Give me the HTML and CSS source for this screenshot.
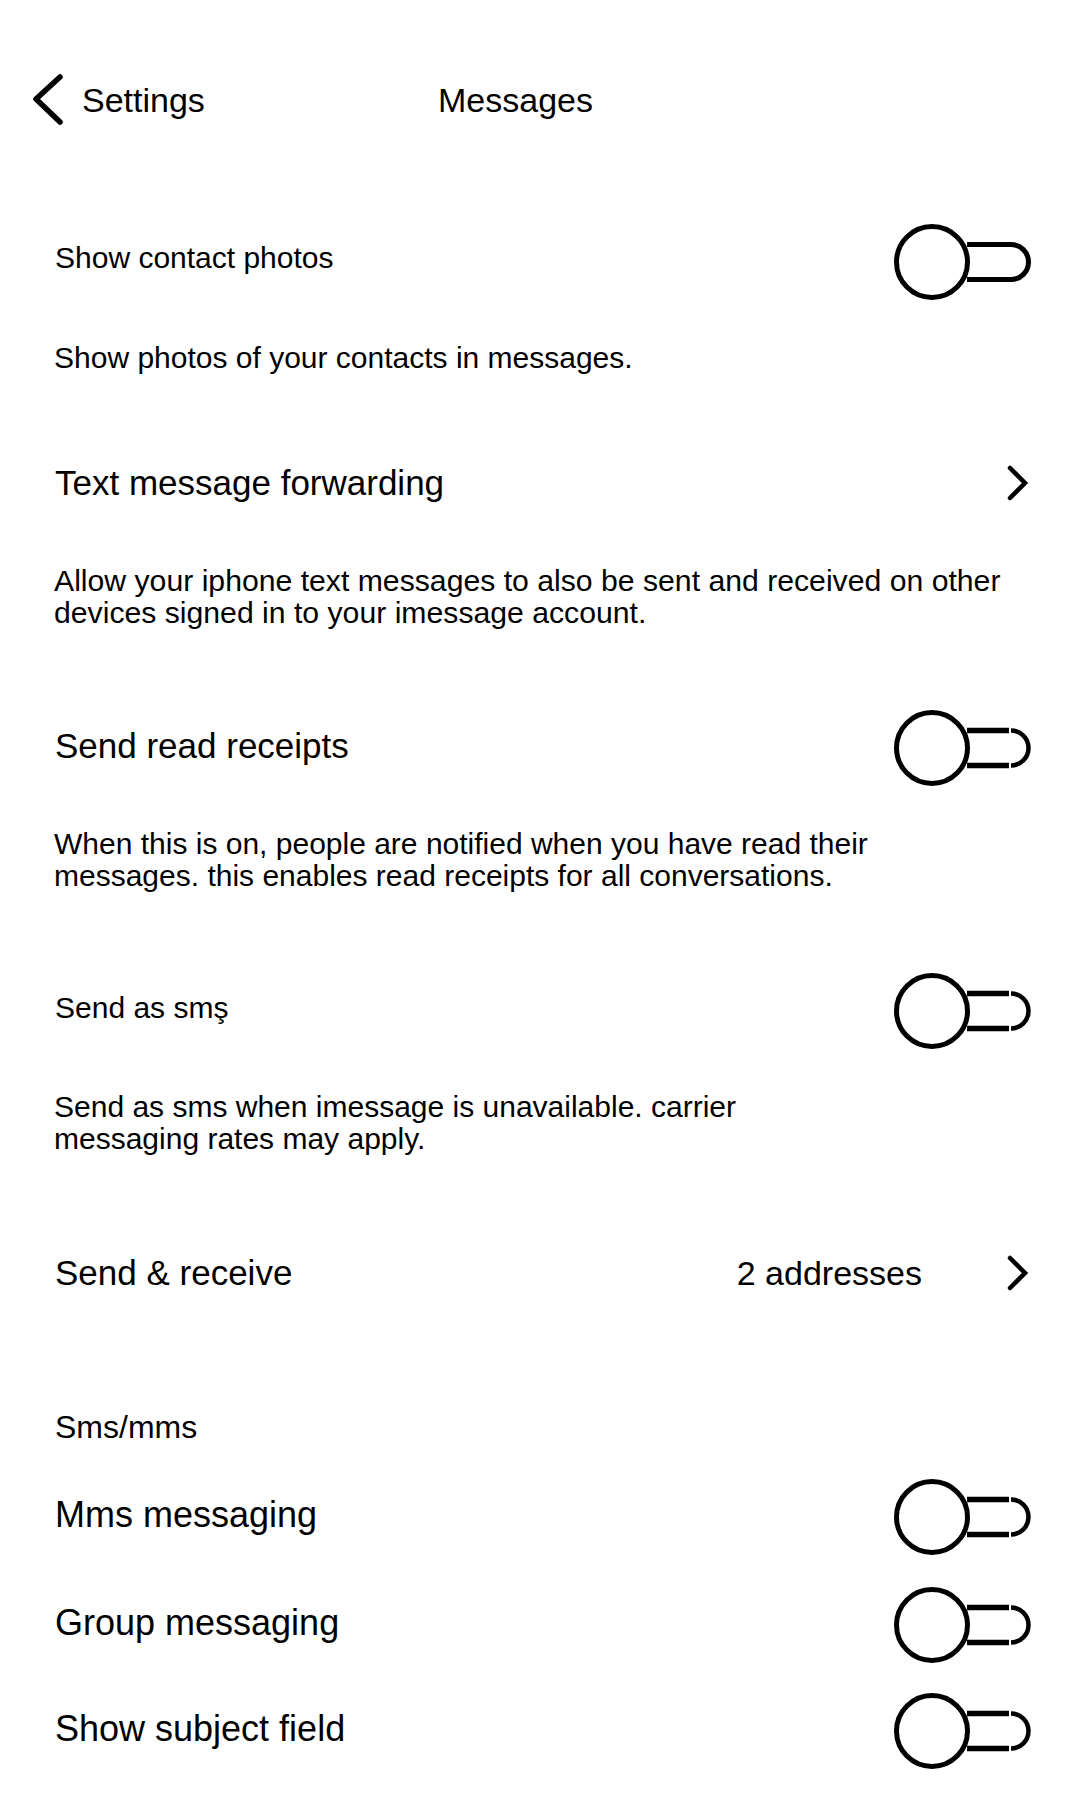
FILE: index.html
```html
<!DOCTYPE html>
<html lang="en">
<head>
<meta charset="utf-8">
<title>Messages</title>
<link rel="stylesheet" href="styles.css">
</head>
<body>
<div class="screen">
  <header class="nav">
    <div class="back">
      <svg class="back-icon" width="36" height="56" viewBox="0 0 36 56"><path d="M29 5 L5 27 L29 50" fill="none" stroke="#000" stroke-width="5.5" stroke-linecap="round" stroke-linejoin="round"/></svg>
      <span class="back-label">Settings</span>
    </div>
    <div class="nav-title">Messages</div>
  </header>

  <div class="row row-toggle r1">
    <span class="label small">Show contact photos</span>
    <svg class="toggle" width="142" height="80" viewBox="0 0 142 80"><circle cx="41" cy="40" r="35.5" fill="none" stroke="#000" stroke-width="5"/><path d="M76 22.5 H120 A17.5 17.5 0 0 1 120 57.5 H76" fill="none" stroke="#000" stroke-width="5"/></svg>
  </div>
  <p class="desc d1">Show photos of your contacts in messages.</p>

  <div class="row row-link r2">
    <span class="label">Text message forwarding</span>
    <svg class="chev" width="24" height="36" viewBox="0 0 24 36"><path d="M5 3 L20 18 L5 33" fill="none" stroke="#000" stroke-width="4.5" stroke-linecap="round" stroke-linejoin="miter"/></svg>
  </div>
  <p class="desc d2">Allow your iphone text messages to also be sent and received on other<br>devices signed in to your imessage account.</p>

  <div class="row row-toggle r3">
    <span class="label">Send read receipts</span>
    <svg class="toggle" width="142" height="80" viewBox="0 0 142 80"><circle cx="41" cy="40" r="35.5" fill="none" stroke="#000" stroke-width="5"/><path d="M76 22.5 H118 M76 57.5 H118" fill="none" stroke="#000" stroke-width="5.5"/><path d="M120 22.5 A17.5 17.5 0 0 1 120 57.5" fill="none" stroke="#000" stroke-width="4.5"/></svg>
  </div>
  <p class="desc d3">When this is on, people are notified when you have read their<br>messages. this enables read receipts for all conversations.</p>

  <div class="row row-toggle r4">
    <span class="label small">Send as smş</span>
    <svg class="toggle" width="142" height="80" viewBox="0 0 142 80"><circle cx="41" cy="40" r="35.5" fill="none" stroke="#000" stroke-width="5"/><path d="M76 22.5 H118 M76 57.5 H118" fill="none" stroke="#000" stroke-width="5.5"/><path d="M120 22.5 A17.5 17.5 0 0 1 120 57.5" fill="none" stroke="#000" stroke-width="4.5"/></svg>
  </div>
  <p class="desc d4">Send as sms when imessage is unavailable. carrier<br>messaging rates may apply.</p>

  <div class="row row-link r5">
    <span class="label">Send &amp; receive</span>
    <div class="link-end">
      <span class="value">2 addresses</span>
      <svg class="chev" width="24" height="36" viewBox="0 0 24 36"><path d="M5 3 L20 18 L5 33" fill="none" stroke="#000" stroke-width="4.5" stroke-linecap="round" stroke-linejoin="miter"/></svg>
    </div>
  </div>

  <div class="section-label">Sms/mms</div>

  <div class="row row-toggle r6">
    <span class="label big">Mms messaging</span>
    <svg class="toggle" width="142" height="80" viewBox="0 0 142 80"><circle cx="41" cy="40" r="35.5" fill="none" stroke="#000" stroke-width="5"/><path d="M76 22.5 H118 M76 57.5 H118" fill="none" stroke="#000" stroke-width="5.5"/><path d="M120 22.5 A17.5 17.5 0 0 1 120 57.5" fill="none" stroke="#000" stroke-width="4.5"/></svg>
  </div>
  <div class="row row-toggle r7">
    <span class="label big">Group messaging</span>
    <svg class="toggle" width="142" height="80" viewBox="0 0 142 80"><circle cx="41" cy="40" r="35.5" fill="none" stroke="#000" stroke-width="5"/><path d="M76 22.5 H118 M76 57.5 H118" fill="none" stroke="#000" stroke-width="5.5"/><path d="M120 22.5 A17.5 17.5 0 0 1 120 57.5" fill="none" stroke="#000" stroke-width="4.5"/></svg>
  </div>
  <div class="row row-toggle r8">
    <span class="label big">Show subject field</span>
    <svg class="toggle" width="142" height="80" viewBox="0 0 142 80"><circle cx="41" cy="40" r="35.5" fill="none" stroke="#000" stroke-width="5"/><path d="M76 22.5 H118 M76 57.5 H118" fill="none" stroke="#000" stroke-width="5.5"/><path d="M120 22.5 A17.5 17.5 0 0 1 120 57.5" fill="none" stroke="#000" stroke-width="4.5"/></svg>
  </div>
</div>
</body>
</html>
```

FILE: styles.css
```css
* { box-sizing: border-box; }

html, body {
  margin: 0;
  padding: 0;
  background: #fff;
}

body {
  font-family: "Liberation Sans", Arial, sans-serif;
  color: #000;
}

.screen {
  width: 1080px;
  min-height: 1800px;
  display: flex;
  flex-direction: column;
}

.nav {
  display: flex;
  align-items: center;
  height: 56px;
  margin-top: 72px;
  padding-left: 31px;
}

.back {
  display: flex;
  align-items: center;
  gap: 15px;
  width: 407px;
}

.back-icon { display: block; }

.back-label {
  font-size: 34px;
  line-height: 40px;
}

.nav-title {
  font-size: 34px;
  line-height: 40px;
}

.row {
  display: flex;
  align-items: center;
  justify-content: space-between;
  padding: 0 47px 0 55px;
}

.row-toggle { height: 80px; }
.row-link { height: 40px; padding-right: 51px; }

.toggle, .chev { display: block; flex: none; }
.toggle { margin-top: 3px; }
.r1 .toggle { margin-top: 7px; }
.r4 .toggle { margin-top: 5px; }

.label {
  font-size: 35px;
  line-height: 40px;
}

.label.small {
  font-size: 30px;
}

.label.big {
  font-size: 36px;
}

.link-end {
  display: flex;
  align-items: center;
  gap: 83px;
}

.value {
  font-size: 34px;
  line-height: 40px;
}

.desc {
  margin: 0;
  padding-left: 54px;
  font-size: 30px;
  line-height: 32px;
}

.d2 { font-size: 30.2px; }

.section-label {
  padding-left: 55px;
  font-size: 32px;
  line-height: 32px;
}

.r1 { margin-top: 90px; }
.d1 { margin-top: 44px; }
.r2 { margin-top: 89px; }
.d2 { margin-top: 62px; }
.r3 { margin-top: 77px; }
.d3 { margin-top: 42px; }
.r4 { margin-top: 76px; }
.d4 { margin-top: 43px; }
.r5 { margin-top: 98px; }
.section-label { margin-top: 118px; }
.r6 { margin-top: 32px; }
.r7 { margin-top: 28px; }
.r8 { margin-top: 26px; }
```
